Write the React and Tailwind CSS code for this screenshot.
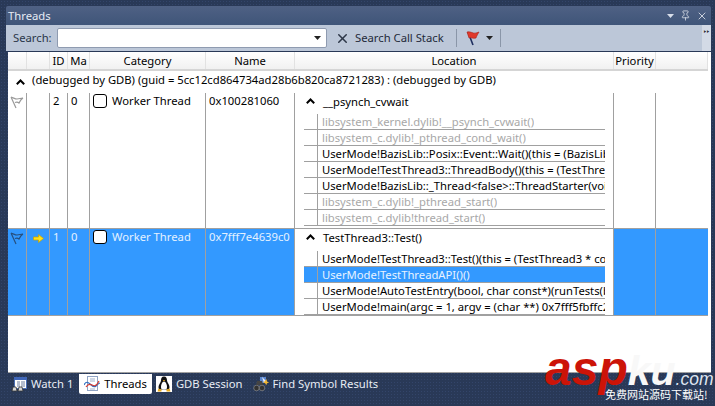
import { X, Pin } from 'lucide-react';

const font = "[font-family:'Noto_Sans',sans-serif]";

const columns = 'grid grid-cols-[19px_23px_18px_22px_116px_89px_319px_42px_1fr]';

const Caret = ({ className = '' }) => (
  <svg width="7" height="4" viewBox="0 0 7 4" className={className}>
    <path d="M0 0h7L3.5 4z" fill="currentColor" />
  </svg>
);

const Chevron = () => (
  <svg width="9" height="6" viewBox="0 0 9 6" className="shrink-0 text-black">
    <path d="M0.8 5.2 4.5 1.5 8.2 5.2" fill="none" stroke="currentColor" strokeWidth="2" />
  </svg>
);

const FlagOutline = ({ color }) => (
  <svg width="14" height="13" viewBox="0 0 14 13">
    <path d="M1 1 6 12M1 1c3 1 4 2 6 2l6-1c-2 1-3 3-4 5-1-1-3-1-4-.5" fill="none" stroke={color} strokeWidth="1.2" />
  </svg>
);

const FlagRed = () => (
  <svg width="16" height="16" viewBox="0 0 16 16">
    <path d="M3 2l5 13" stroke="#1f2f5f" strokeWidth="1.6" fill="none" />
    <path d="M2 2c4-1 6 2 9 1l3-1c-1 2-2 3-3 6-3 1-5-1-7 0z" fill="#e0392b" stroke="#a8231a" strokeWidth="0.6" />
  </svg>
);

const ArrowYellow = () => (
  <svg width="11" height="9" viewBox="0 0 11 9">
    <path d="M0.5 3h5V0.5L10.5 4.5 5.5 8.5V6h-5z" fill="#ffe11a" stroke="#c9a400" strokeWidth="0.7" />
  </svg>
);

const CategoryBox = () => (
  <span className="w-[14px] h-[14px] shrink-0 rounded-[3px] border border-black bg-white" />
);

const WatchIcon = () => (
  <svg width="16" height="16" viewBox="0 0 16 16">
    <rect x="3.500" y="1.500" width="12" height="11" fill="#fff" stroke="#4a6fb5" />
    <path d="M3 1h13v3H3z" fill="#3f66b8" />
    <path d="M6 6h3M10 6h4M6 8h3M10 8h4M6 10h3M10 10h4" stroke="#6d7f9f" />
    <path d="M1 15l1-4h3l1 4zM7 15l1-4h3l1 4z" fill="#d9d9d9" stroke="#333" strokeWidth="0.8" />
  </svg>
);

const ThreadsIcon = () => (
  <svg width="16" height="16" viewBox="0 0 16 16">
    <rect x="3.500" y="0.500" width="10" height="14" fill="#fff" stroke="#8fa3c4" />
    <path d="M6 3h5M6 5h5M6 13h5" stroke="#9fb0cc" />
    <path d="M0 9c2-4 4-3 6-1s4 4 6 2 3-3 4-3" fill="none" stroke="#2f6fc0" strokeWidth="1.2" />
    <path d="M2 11c2-3 4-3 6-2s4 2 7-4" fill="none" stroke="#d83a2e" strokeWidth="1.2" />
  </svg>
);

const PenguinIcon = () => (
  <svg width="16" height="16" viewBox="0 0 16 16">
    <rect width="16" height="16" fill="#fff" />
    <path d="M8 0.500c2.400 0 3 2 3 4s2.500 4 2.500 6.500-1.500 2.500-2.500 2.500h-6c-1 0-2.500 0-2.500-2.500S5 6.500 5 4.500s.6-4 3-4z" fill="#111" />
    <path d="M8 5.500c1.600 0 3 3 3 5.500s-1.400 2.500-3 2.500-3 0-3-2.500 1.400-5.500 3-5.500z" fill="#fff" />
    <path d="M6.800 4h2.400L8 5.500z" fill="#e8a91c" />
    <path d="M2.500 12.500l3 1v2h-4zM13.500 12.500l-3 1v2h4z" fill="#e8a91c" />
  </svg>
);

const FindIcon = () => (
  <svg width="16" height="16" viewBox="0 0 16 16">
    <path d="M7 1h6v6H7z" fill="#5a86cf" />
    <path d="M9 1l5 5-3 1z" fill="#e8edf7" />
    <path d="M12 5l1.500-2 .5 2.500 2 1-2 .8-.8 2-1-2-2-.5z" fill="#f2b632" />
    <circle cx="3.500" cy="12" r="2.800" fill="#333" stroke="#999" strokeWidth="0.6" />
    <circle cx="9" cy="12" r="2.800" fill="#333" stroke="#999" strokeWidth="0.6" />
    <path d="M3 9l1-4h3v4zM7 9V5h2l1 4z" fill="#444" />
  </svg>
);

const StackRow = ({ text, tone = 'normal' }) => {
  const selected = tone === 'selected';
  return (
    <div className={`h-[16px] flex border-b border-[#a0a0a0] ${selected ? 'bg-[#3399ff] text-[#e8f3ff]' : tone === 'dim' ? 'text-[#a8a8a8]' : 'text-black'}`}>
      <div className="w-[14px] shrink-0 border-r border-[#a0a0a0]" />
      <div className="pl-[4px] min-w-0 whitespace-nowrap overflow-hidden leading-[15px]">{text}</div>
    </div>
  );
};

const ThreadRow = ({ selected, id, name, title, titleH, rows, flag, pb }) => {
  const cellBorder = 'border-r border-[#a0a0a0]';
  const tint = selected ? 'bg-[#3399ff] text-[#e4f1ff]' : 'bg-white text-black';
  return (
    <div className={`${columns} ${selected ? 'border-y border-[#a0a0a0]' : ''}`}>
      <div className={`${cellBorder} ${tint} flex justify-center pt-[3px]`}>{flag}</div>
      <div className={`${cellBorder} ${tint} flex justify-center pt-[5px]`}>{selected && <ArrowYellow />}</div>
      <div className={`${cellBorder} ${tint} pl-[3px] leading-[15px]`}>{id}</div>
      <div className={`${cellBorder} ${tint} pl-[3px] leading-[15px]`}>0</div>
      <div className={`${cellBorder} ${tint} flex items-start gap-[5px] pl-[3px] pt-[1px] leading-[13px]`}>
        <CategoryBox />
        <span className="whitespace-nowrap">Worker Thread</span>
      </div>
      <div className={`${cellBorder} ${tint} pl-[3px] leading-[15px] overflow-hidden whitespace-nowrap`}>{name}</div>
      <div className={`${cellBorder} bg-white text-black pl-[9px] pr-[8px] ${pb}`}>
        <div className={`flex items-start gap-[8px] ${titleH} pl-[2px] leading-[17px]`}>
          <span className="pt-[5px] flex"><Chevron /></span>
          <span className="whitespace-nowrap">{title}</span>
        </div>
        {rows.map(r => (
          <StackRow key={r.text} text={r.text} tone={r.tone} />
        ))}
      </div>
      <div className={`${cellBorder} ${tint}`} />
      <div className={selected ? 'bg-[#3399ff]' : 'bg-white'} />
    </div>
  );
};

const firstRows = [
  { text: 'libsystem_kernel.dylib!__psynch_cvwait()', tone: 'dim' },
  { text: 'libsystem_c.dylib!_pthread_cond_wait()', tone: 'dim' },
  { text: 'UserMode!BazisLib::Posix::Event::Wait()(this = (BazisLib::Posix::Event *) 0x1002' },
  { text: 'UserMode!TestThread3::ThreadBody()(this = (TestThread3 *) 0x7fff5fbff7e0)' },
  { text: 'UserMode!BazisLib::_Thread<false>::ThreadStarter(void*)(lpParam = 0x7fff5fbff7e0)' },
  { text: 'libsystem_c.dylib!_pthread_start()', tone: 'dim' },
  { text: 'libsystem_c.dylib!thread_start()', tone: 'dim' },
];

const secondRows = [
  { text: 'UserMode!TestThread3::Test()(this = (TestThread3 * const) 0x7fff5fbff7e0)' },
  { text: 'UserMode!TestThreadAPI()()', tone: 'selected' },
  { text: 'UserMode!AutoTestEntry(bool, char const*)(runTests(bool)) 0x7fff5fbffa10' },
  { text: 'UserMode!main(argc = 1, argv = (char **) 0x7fff5fbffc28)' },
];

const headers = ['', '', 'ID', 'Ma', 'Category', 'Name', 'Location', 'Priority', ''];

const tabs = [
  { label: 'Watch 1', icon: <WatchIcon /> },
  { label: 'Threads', icon: <ThreadsIcon />, active: true },
  { label: 'GDB Session', icon: <PenguinIcon /> },
  { label: 'Find Symbol Results', icon: <FindIcon /> },
];

export default function App() {
  return (
    <div className={`relative w-[715px] h-[406px] overflow-hidden bg-[#293957] bg-[radial-gradient(#33456a_0.7px,transparent_0.7px)] bg-[size:3px_3px] pt-[6px] text-[11.250px] ${font}`}>
      <div className="ml-[6px] mr-[4px] h-[19px] rounded-t-[2px] bg-gradient-to-b from-[#4f6184] to-[#3f5579] flex items-center pl-[2px] pr-[3px] text-[#e6ebf4]">
        <span className="flex-1 leading-none">Threads</span>
        <Caret className="text-[#d8deea] mr-[6px]" />
        <Pin size={11} strokeWidth={1.6} className="text-[#e8ecf3] mr-[5px]" />
        <X size={12} strokeWidth={1.6} className="text-[#e8ecf3]" />
      </div>

      <div className="ml-[6px] mr-[4px] h-[26px] bg-[#bcc7d8] flex items-center pl-[7px] text-[#1f2a3a]">
        <span className="w-[44px] shrink-0 text-[#2a3648]">Search:</span>
        <div className="w-[270px] h-[20px] rounded-[2px] border border-[#8f9bb0] bg-white flex items-center justify-end pr-[5px] mr-[8px] text-[#222]">
          <Caret />
        </div>
        <X size={15} strokeWidth={2.400} className="text-[#2d3748] mr-[5px]" />
        <span className="w-[90px] shrink-0 whitespace-nowrap mr-[11px]">Search Call Stack</span>
        <div className="w-px h-[18px] bg-[#8a96a8] mr-[8px]" />
        <FlagRed />
        <Caret className="ml-[5px] mr-[7px] text-[#222]" />
        <div className="w-px h-[18px] bg-[#8a96a8]" />
        <div className="ml-auto w-[9px] h-full bg-[#d3dae6] text-[#222] text-[8px] leading-[14px] text-center">‣‣</div>
      </div>

      <div className="ml-[8px] mr-[4px] mt-[1px] h-[321px] bg-white pr-[3px] border-b border-[#a0a0a0] overflow-hidden">
        <div className={`${columns} h-[19px] bg-gradient-to-b from-white to-[#f1f1f1] border-b-2 border-[#d5d5d5] text-black`}>
          {headers.map((h, i) => (
            <div key={i} className="border-r border-[#e2e2e2] text-center leading-[17px] whitespace-nowrap overflow-hidden">{h}</div>
          ))}
        </div>
        <div className="h-[22px] flex items-center pl-[8px] gap-[7px] text-black">
          <Chevron />
          <span className="whitespace-nowrap pb-[3px]">(debugged by GDB) (guid = 5cc12cd864734ad28b6b820ca8721283) : (debugged by GDB)</span>
        </div>
        <ThreadRow
          id="2"
          name="0x100281060"
          title="__psynch_cvwait"
          titleH="h-[21px]"
          rows={firstRows}
          pb="pb-[2px]"
          flag={<FlagOutline color="#9a9a9a" />}
        />
        <ThreadRow
          selected
          id="1"
          name="0x7fff7e4639c0"
          title="TestThread3::Test()"
          titleH="h-[22px]"
          rows={secondRows}
          flag={<FlagOutline color="#26507f" />}
        />
      </div>

      <div className="flex h-[20px] ml-[6px] mt-[1px] text-[#e8edf5]">
        {tabs.map(t => (
          <div
            key={t.label}
            className={`flex items-center gap-[4px] px-[5px] rounded-b-[2px] whitespace-nowrap ${t.active ? 'bg-white text-black ml-[1px] -mr-[1px]' : ''}`}
          >
            {t.icon}
            <span>{t.label}</span>
          </div>
        ))}
      </div>

      {/* watermark */}
      <div className="absolute left-[545px] top-[345px] w-[170px] h-[61px] [font-family:'Liberation_Sans',sans-serif]">
        <div className="flex items-baseline italic leading-none whitespace-nowrap">
          <span className="text-[48px] font-bold text-[#cc1408]">asp</span>
          <span className="text-[41px] font-bold text-[#f8f8f8]">ku</span>
          <span className="text-[17.500px] text-[#dfe5ef]">.com</span>
        </div>
        <div className="absolute left-[60px] top-[43px] whitespace-nowrap text-[11px] leading-[12px] text-white [font-family:'Noto_Sans_CJK_SC',sans-serif]">免费网站源码下载站!</div>
      </div>
    </div>
  );
}
